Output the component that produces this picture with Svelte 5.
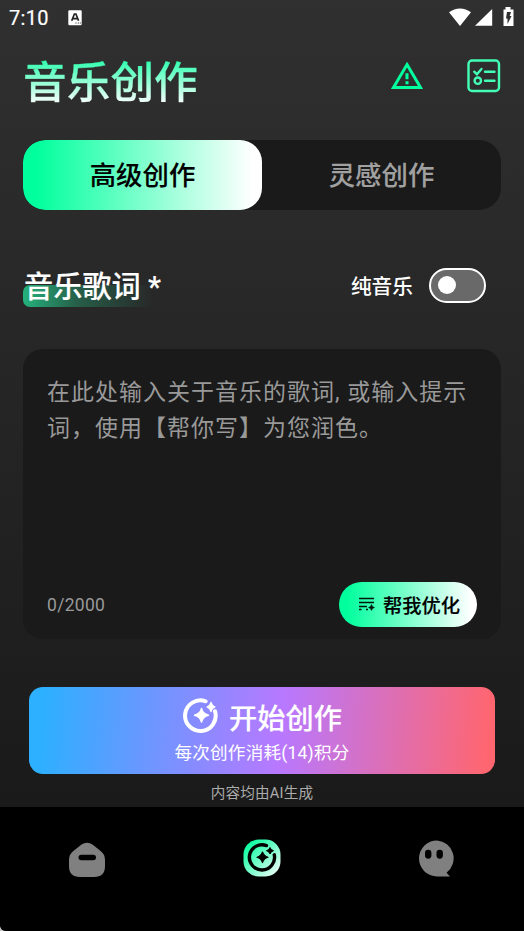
<script>
  let mode = $state(0);
  let instrumental = $state(false);
  const tabs = ['高级创作', '灵感创作'];
</script>

<div class="screen">
  <div class="status">
    <span class="time">7:10</span>
    <svg class="badge" width="14" height="16" viewBox="0 0 14 16">
      <rect x="0.3" y="0.3" width="13.4" height="15" rx="1.2" fill="#fff" />
      <path d="M3.7 10.7 6.4 4h1.5l2.7 6.7M5 8.7h4.3" fill="none" stroke="#222" stroke-width="1.7" />
      <path d="M7.5 13h1M9.8 13h1M11.8 13h1" stroke="#222" stroke-width="1.2" />
    </svg>
    <svg class="signals" width="68" height="20" viewBox="0 0 68 20">
      <path d="M0 5.200C6.500 .1 15.500 .1 22 5.200L11 19Z" fill="#fff" />
      <path d="M26 18.800 43.200 2V18.800Z" fill="#fff" />
      <path d="M54.500 2.500h2V0h5v2.500h3V19h-10Z" fill="#fff" />
      <path d="M58 5h4l-1.300 4H62.500l-4 8v-5.500H57Z" fill="#2e2e2e" />
    </svg>
  </div>

  <header>
    <h1>音乐创作</h1>
    <div class="actions">
      <svg width="34" height="30" viewBox="0 0 34 30">
        <path d="M17 3.600 30.500 26.500H3.500Z" fill="none" stroke="#00ff9d" stroke-width="3" />
        <path d="M17 12.300v6M17 20.300v3" stroke="#00ff9d" stroke-width="3" />
      </svg>
      <svg width="34" height="34" viewBox="0 0 34 34" fill="none" stroke="#43ffb5" stroke-width="2.400">
        <rect x="1.500" y="1.500" width="30.500" height="30.500" rx="3.500" />
        <path d="m7.200 12.700 2.700 2.500 4.600-5.200M18 12.700h9.500M18 21.700h9.500" stroke-linecap="round" />
        <circle cx="10.800" cy="21.700" r="3.200" />
      </svg>
    </div>
  </header>

  <nav class="tabs">
    {#each tabs as tab, i}
      <button class:active={mode === i} onclick={() => (mode = i)}>{tab}</button>
    {/each}
  </nav>

  <div class="section">
    <h2>音乐歌词 *</h2>
    <div class="option">
      <span>纯音乐</span>
      <button class="switch" class:on={instrumental} aria-label="纯音乐" onclick={() => (instrumental = !instrumental)}><i></i></button>
    </div>
  </div>

  <div class="editor">
    <p>在此处输入关于音乐的歌词, 或输入提示<br />词，使用【帮你写】为您润色。</p>
    <div class="editor-foot">
      <span>0/2000</span>
      <button class="polish">
        <svg width="17" height="14" viewBox="0 0 17 14">
          <path d="M1 1.500h15M1 5.500h15M1 9.500h8M1 12.500h2.500M8 12.500h2" stroke="#00150c" stroke-width="1.300" fill="none" />
          <path d="M13.500 7.500q.6 2.400 3 3-2.400.6-3 3-.6-2.400-3-3 2.400-.6 3-3Z" fill="#00150c" stroke="#00150c" stroke-width=".5" />
        </svg>
        <b>帮我优化</b>
      </button>
    </div>
  </div>

  <button class="create">
    <span class="create-main">
      <svg width="36" height="36" viewBox="0 0 36 36">
        <path d="M22.600 3.300A15.300 15.300 0 1 0 32 13.200" fill="none" stroke="#fff" stroke-width="4" stroke-linecap="round" />
        <path d="M18.500 10.500Q19.700 16 25.500 17.200 19.700 18.500 18.500 24 17.300 18.500 11.500 17.200 17.300 16 18.500 10.500Z" fill="#fff" stroke="#fff" stroke-width="1.500" stroke-linejoin="round" />
        <path d="M28 4.500Q28.900 8 32 9 28.900 10 28 13.500 27.100 10 24 9 27.100 8 28 4.500Z" fill="#fff" stroke="#fff" stroke-width="1.300" stroke-linejoin="round" />
      </svg>
      <b>开始创作</b>
    </span>
    <span class="cost">每次创作消耗(14)积分</span>
  </button>
  <div class="notice">内容均由AI生成</div>

  <footer>
    <div><svg width="38" height="36" viewBox="0 0 38 36">
      <path d="M13.500 2.400Q19-.800 24.500 2.400L32 8.500Q37 12 37 18V24Q37 35 26 35H12Q1 35 1 24V18Q1 12 6 8.500Z" fill="#808080" />
      <rect x="10.500" y="12.700" width="17.500" height="5.600" rx="2.800" />
    </svg></div>
    <div><svg width="38" height="38" viewBox="0 0 38 38">
      <defs><linearGradient id="mint" x1="0" y1="0" x2="1" y2="1"><stop offset=".1" stop-color="#05ff9e" /><stop offset="1" stop-color="#fff" /></linearGradient></defs>
      <rect x=".5" y=".5" width="37" height="37" rx="15" fill="url(#mint)" />
      <path d="M23.500 6.600A12.600 12.600 0 1 0 31.300 15.800" fill="none" stroke="#000" stroke-width="3.400" stroke-linecap="round" />
      <path d="M19.500 13Q20.700 17 25 18.300 20.700 19.600 19.500 23.700 18.300 19.600 14 18.300 18.300 17 19.500 13Z" stroke="#000" stroke-width="1.200" stroke-linejoin="round" />
      <path d="M27 8.500Q27.700 10.900 30.500 11.700 27.700 12.500 27 15 26.300 12.500 23.500 11.700 26.300 10.900 27 8.500Z" stroke="#000" stroke-linejoin="round" />
    </svg></div>
    <div><svg width="38" height="38" viewBox="0 0 38 38">
      <path d="M19 1.400a18 18 0 1 0 0 36H32L28.500 33.700A18 18 0 0 0 19 1.400Z" fill="#808080" />
      <rect x="7" y="10.700" width="6.400" height="9" rx="3.100" /><rect x="18.500" y="10.700" width="6.400" height="9" rx="3.100" />
    </svg></div>
  </footer>
</div>

<style>
  :global(body) { margin: 0; background: linear-gradient(90deg, #c4c4c4 12px, #000 12px); }
  .screen {
    box-sizing: border-box;
    display: flex;
    flex-direction: column;
    width: 524px;
    height: 931px;
    overflow: hidden;
    border-bottom-left-radius: 6px;
    background: linear-gradient(#303030 0, #1a1a1a 807px);
    color: #fff;
    font-family: Roboto, "Noto Sans CJK SC", sans-serif;
    font-weight: 400;
  }
  svg { display: block; flex: none; }
  h1, h2, p { margin: 0; }
  button { border: 0; padding: 0; font: inherit; color: inherit; }
  b { font-weight: 500; -webkit-text-stroke: .15px currentColor; }
  .status { display: flex; height: 36px; padding: 0 9px; align-items: center; }
  .time { width: 59px; font-size: 20px; font-weight: 400; line-height: 36px; letter-spacing: .3px; -webkit-text-stroke: .2px currentColor; }
  .badge { margin-top: -1px; }
  .signals { margin: -2px -2px 0 auto; }
  header { display: flex; height: 103.600px; padding: 0 23px; justify-content: space-between; }
  h1 {
    height: 64px;
    margin-top: 15px;
    font-size: 43.700px;
    font-weight: 500;
    line-height: 64px;
    background: linear-gradient(#1fffa8 6px, #fff 54px);
    background-clip: text;
    color: transparent;
    -webkit-text-stroke: .35px transparent;
  }
  .actions { display: flex; gap: 42.500px; margin: 22.700px .5px 0 0; }
  .actions svg:first-child { margin-top: 2.500px; }
  .tabs { display: flex; height: 70px; margin: 0 23px; border-radius: 22px; background: #1a1a1a; overflow: hidden; flex: none; }
  .tabs button { flex: 1; padding-bottom: 2px; background: none; border-radius: 22px; color: #a1a1a1; font-size: 26.400px; font-weight: 500; -webkit-text-stroke: .1px currentColor; }
  .tabs .active { color: #000; background: linear-gradient(90deg, #00ff9d 5%, #fff 96%); }
  .section { display: flex; height: 139.400px; margin: 0 38px 0 23px; align-items: center; justify-content: space-between; padding-top: 8px; box-sizing: border-box; }
  h2 { position: relative; z-index: 0; width: 140px; padding-left: 1px; height: 42px; margin-top: 7px; font-size: 29.200px; font-weight: 500; line-height: 43px; white-space: nowrap; -webkit-text-stroke: .15px currentColor; }
  h2::before { content: ""; position: absolute; z-index: -1; inset: 19px 0 1px 0; border-radius: 7px; background: linear-gradient(90deg, #24b27c, #24b27c66 38%, #24b27c00 92%); }
  .option { display: flex; align-items: center; gap: 16px; margin-top: 4px; font-size: 20.700px; font-weight: 500; }
  .switch { display: flex; box-sizing: border-box; width: 57px; height: 35px; padding-left: 6.500px; align-items: center; border: 2px solid #fff; border-radius: 18px; background: #696969; }
  .switch i { width: 18px; height: 18px; border-radius: 50%; background: #fff; }
  .switch.on { justify-content: flex-end; padding: 0 7px 0 0; background: #00c87c; }
  .editor { display: flex; flex-direction: column; justify-content: space-between; box-sizing: border-box; height: 290px; margin: 0 23px; padding: 26px 24px 12px; border-radius: 20px; background: #1a1a1a; color: #999; flex: none; }
  .editor p { font-size: 23px; line-height: 36.500px; letter-spacing: 1px; white-space: nowrap; }
  .editor-foot { display: flex; align-items: center; justify-content: space-between; font-size: 17.500px; letter-spacing: .3px; }
  .editor-foot > span { padding-top: 2px; }
  .polish { display: flex; align-items: center; justify-content: center; gap: 8px; width: 138px; height: 45px; padding-left: 2px; box-sizing: border-box; border-radius: 23px; color: #000; background: linear-gradient(90deg, #00ff9d 5%, #fff 96%); font-size: 19.300px; letter-spacing: 0; }
  .polish b { margin-top: 2px; }
  .create { display: flex; flex-direction: column; height: 87px; margin: 48px 29px 0; border-radius: 14px; align-items: center; background: linear-gradient(95deg, #2cb0ff 3%, #b878ff 54%, #ff6670 98%); flex: none; }
  .create-main { display: flex; height: 54px; align-items: center; gap: 11px; padding-top: 6px; box-sizing: border-box; font-size: 28.200px; line-height: 42px; }
  .create-main svg { margin: -1px -1px 0 1px; }
  .create-main b { margin-top: 7px; }
  .cost { font-size: 17.600px; line-height: 26px; letter-spacing: .2px; margin-top: -1px; }
  .notice { height: 33px; text-align: center; font-size: 14.600px; line-height: 38px; letter-spacing: .2px; color: #ababab; }
  footer { display: flex; flex: 1; box-sizing: border-box; padding-top: 32px; background: #000; }
  footer div { flex: 1; display: flex; justify-content: center; align-items: flex-start; }
  footer div:first-child svg { margin-top: 3px; }
</style>
